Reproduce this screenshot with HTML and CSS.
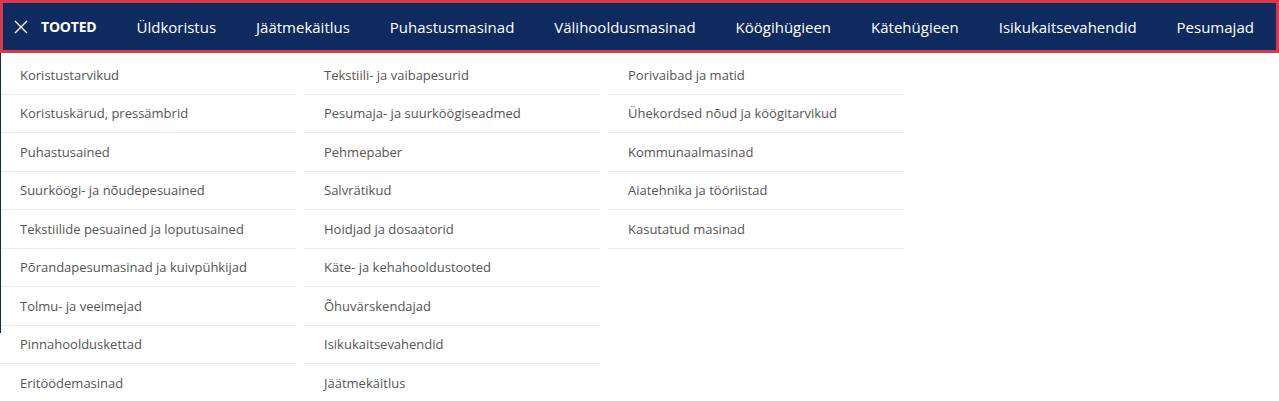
FILE: index.html
```html
<!DOCTYPE html>
<html>
<head>
    <title>Tooted</title>
    <link rel="stylesheet" href="styles.css">
</head>
<body>
    <div id="navbar">
        <div class="nav-head">
            <button class="close-btn" aria-label="Sulge">
                <svg width="14" height="14" viewBox="0 0 14 14"><path d="M1 1 L13 13 M13 1 L1 13" stroke="#fff" stroke-width="1.4" fill="none"/></svg>
            </button>
            <span class="nav-title">TOOTED</span>
        </div>
        <a href="#">Üldkoristus</a>
        <a href="#">Jäätmekäitlus</a>
        <a href="#">Puhastusmasinad</a>
        <a href="#">Välihooldusmasinad</a>
        <a href="#">Köögihügieen</a>
        <a href="#">Kätehügieen</a>
        <a href="#">Isikukaitsevahendid</a>
        <a href="#">Pesumajad</a>
    </div>

    <div class="menu">
        <ul class="column">
            <li><a href="#">Koristustarvikud</a></li>
            <li><a href="#">Koristuskärud, pressämbrid</a></li>
            <li><a href="#">Puhastusained</a></li>
            <li><a href="#">Suurköögi- ja nõudepesuained</a></li>
            <li><a href="#">Tekstiilide pesuained ja loputusained</a></li>
            <li><a href="#">Põrandapesumasinad ja kuivpühkijad</a></li>
            <li><a href="#">Tolmu- ja veeimejad</a></li>
            <li><a href="#">Pinnahoolduskettad</a></li>
            <li><a href="#">Eritöödemasinad</a></li>
        </ul>
        <ul class="column">
            <li><a href="#">Tekstiili- ja vaibapesurid</a></li>
            <li><a href="#">Pesumaja- ja suurköögiseadmed</a></li>
            <li><a href="#">Pehmepaber</a></li>
            <li><a href="#">Salvrätikud</a></li>
            <li><a href="#">Hoidjad ja dosaatorid</a></li>
            <li><a href="#">Käte- ja kehahooldustooted</a></li>
            <li><a href="#">Õhuvärskendajad</a></li>
            <li><a href="#">Isikukaitsevahendid</a></li>
            <li><a href="#">Jäätmekäitlus</a></li>
        </ul>
        <ul class="column">
            <li><a href="#">Porivaibad ja matid</a></li>
            <li><a href="#">Ühekordsed nõud ja köögitarvikud</a></li>
            <li><a href="#">Kommunaalmasinad</a></li>
            <li><a href="#">Aiatehnika ja tööriistad</a></li>
            <li><a href="#">Kasutatud masinad</a></li>
        </ul>
    </div>
</body>
</html>
```

FILE: styles.css
```css
body {
    font-family: "Open Sans", Arial, sans-serif;
    margin: 0;
    padding: 0;
    background-color: #fff;
}

#navbar {
    background-color: #0f2a5f;
    border: 3px solid #d83a4b;
    height: 47px;
    padding: 0 22px 0 11px;
    display: flex;
    align-items: center;
    justify-content: space-between;
}

#navbar .nav-head {
    display: flex;
    align-items: center;
    gap: 13px;
}

#navbar .close-btn {
    background: transparent;
    border: none;
    padding: 0;
    display: flex;
    align-items: center;
    cursor: pointer;
}

#navbar .nav-title {
    color: #fff;
    font-weight: 700;
    font-size: 14px;
    letter-spacing: -0.2px;
}

#navbar a {
    color: #fff;
    text-decoration: none;
    font-size: 15px;
    white-space: nowrap;
}

.menu {
    position: relative;
    display: flex;
    align-items: flex-start;
    gap: 8px;
    padding-top: 3px;
}

/* thin navy edge of the page behind the dropdown */
.menu::before {
    content: "";
    position: absolute;
    left: 0;
    top: 0;
    width: 1px;
    height: 280px;
    background-color: #0f2a5f;
}

.column {
    list-style: none;
    margin: 0;
    padding: 0;
    width: 296px;
}

.column li {
    height: 37.5px;
    border-bottom: 1px solid #ececec;
    display: flex;
    align-items: center;
    padding-left: 20px;
}

.column li a {
    color: #555;
    text-decoration: none;
    font-size: 13px;
}
```
